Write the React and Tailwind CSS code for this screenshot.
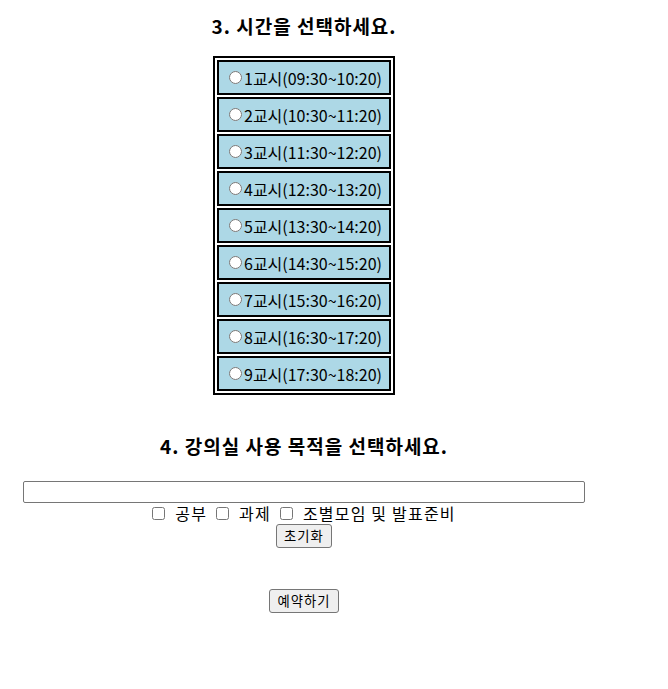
import React, { useState } from "react";

const periods = [
  "1교시(09:30~10:20)",
  "2교시(10:30~11:20)",
  "3교시(11:30~12:20)",
  "4교시(12:30~13:20)",
  "5교시(13:30~14:20)",
  "6교시(14:30~15:20)",
  "7교시(15:30~16:20)",
  "8교시(16:30~17:20)",
  "9교시(17:30~18:20)",
];

const purposes = ["공부", "과제", "조별모임 및 발표준비"];

function App() {
  const [time, setTime] = useState("");
  const [purpose, setPurpose] = useState("");
  const [checked, setChecked] = useState({});

  // Reset purpose input and checkboxes
  const handleReset = () => {
    setPurpose("");
    setChecked({});
  };

  return (
    <div className="w-[608px] text-center text-black font-['Noto_Sans_CJK_KR',sans-serif]">
      <h3 className="pt-[14px] text-[19px] font-bold leading-[24px] tracking-[1px]">3. 시간을 선택하세요.</h3>

      {/* Time table */}
      <table className="mx-auto mt-[18px] border-2 border-black border-separate border-spacing-[2px]">
        <tbody>
          {periods.map((p, i) => (
            <tr key={i}>
              <td className="w-[174px] h-[35px] border-2 border-black bg-[#add8e6] px-[5px] text-left text-[16px] leading-[20px]">
                <label className="flex items-center">
                  <input
                    type="radio"
                    name="time"
                    value={i + 1}
                    checked={time === String(i + 1)}
                    onChange={(e) => setTime(e.target.value)}
                    className="ml-[5px] mr-[2px] w-[13px] h-[13px]"
                  />
                  <span>{p}</span>
                </label>
              </td>
            </tr>
          ))}
        </tbody>
      </table>

      <h4 className="mt-[39px] text-[19px] font-bold leading-[24px] tracking-[1px]">4. 강의실 사용 목적을 선택하세요.</h4>

      <input
        type="text"
        value={purpose}
        onChange={(e) => setPurpose(e.target.value)}
        className="block mx-auto mt-[23px] w-[562px] h-[22px] border border-[#767676] rounded-[2px] px-[2px] text-[13.33px]"
      />

      {/* Purpose checkboxes */}
      <div className="flex justify-center items-center h-[21px] text-[16px] leading-[21px]">
        {purposes.map((p, i) => (
          <label key={p} className="flex items-center">
            <input
              type="checkbox"
              checked={!!checked[i]}
              onChange={() => setChecked({ ...checked, [i]: !checked[i] })}
              className={`w-[13px] h-[13px] mr-[10px] ${i === 0 ? "ml-0" : "ml-[9px]"}`}
            />
            <span className="tracking-[1.2px]">{p}</span>
          </label>
        ))}
      </div>

      <div className="flex justify-center">
        <button
          onClick={handleReset}
          className="h-[24px] px-[7px] bg-[#efefef] border border-[#767676] rounded-[3px] text-[13.33px] leading-[20px] tracking-[1px]"
        >
          초기화
        </button>
      </div>

      <div className="flex justify-center mt-[41px]">
        <button className="h-[24px] px-[7px] bg-[#efefef] border border-[#767676] rounded-[3px] text-[13.33px] leading-[20px] tracking-[1px]">
          예약하기
        </button>
      </div>
    </div>
  );
}

export default App;
